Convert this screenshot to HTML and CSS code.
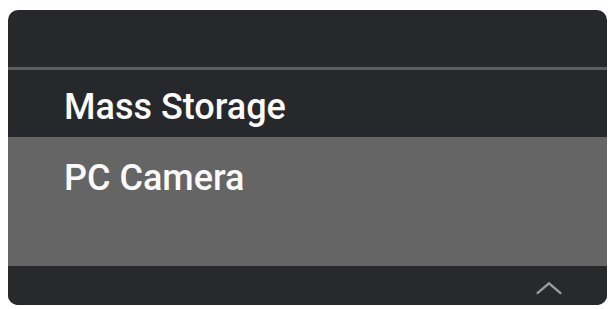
FILE: index.html
```html
<!DOCTYPE html>
<html lang="en">
  <head>
    <meta charset="UTF-8" />
    <meta name="viewport" content="width=device-width, initial-scale=1.0" />
    <title>USB Mode</title>
    <link rel="stylesheet" href="styles.css">
  </head>
  <body>
    <!-- 전체 패널 -->
    <div class="panel">
      <!-- 상단바 -->
      <div class="topbar"></div>
      <!-- 목록 -->
      <ul class="list">
        <li class="item">Mass Storage</li>
        <li class="item on">PC Camera</li>
      </ul>
      <!-- 하단바 -->
      <div class="bottombar">
        <svg class="up" viewBox="0 0 30 14">
          <polyline points="2,13 15,2 28,13" />
        </svg>
      </div>
    </div>
  </body>
</html>
```

FILE: styles.css
```css
html,
body {
  margin: 0;
  padding: 0;
  background: #fff;
}
/* 전체 패널 */
.panel {
  display: flex;
  flex-direction: column;
  margin: 10px 8px 0 8px;
  height: 295px;
  border-radius: 10px;
  overflow: hidden;
  background: #26282b;
  font-family: Roboto, "Liberation Sans", sans-serif;
}
/* 상단바 */
.topbar {
  height: 57px;
  border-bottom: 3px solid #5b5e60;
}
/* 목록 */
.list {
  list-style: none;
  margin: 0;
  padding: 0;
  display: flex;
  flex-direction: column;
}
.item {
  box-sizing: border-box;
  height: 67px;
  padding: 16px 0 0 56px;
  color: #fafafa;
  font-size: 36px;
  font-weight: 500;
  line-height: 42px;
}
/* 선택된 항목 */
.item.on {
  height: 129px;
  padding-top: 20px;
  background: #666566;
}
/* 하단바 */
.bottombar {
  flex: 1;
  display: flex;
  justify-content: flex-end;
  align-items: center;
  padding-right: 44px;
  background: #27292b;
}
.up {
  width: 28px;
  height: 14px;
  margin-top: 5px;
}
.up polyline {
  fill: none;
  stroke: #9c9c9c;
  stroke-width: 2.5;
}
```
